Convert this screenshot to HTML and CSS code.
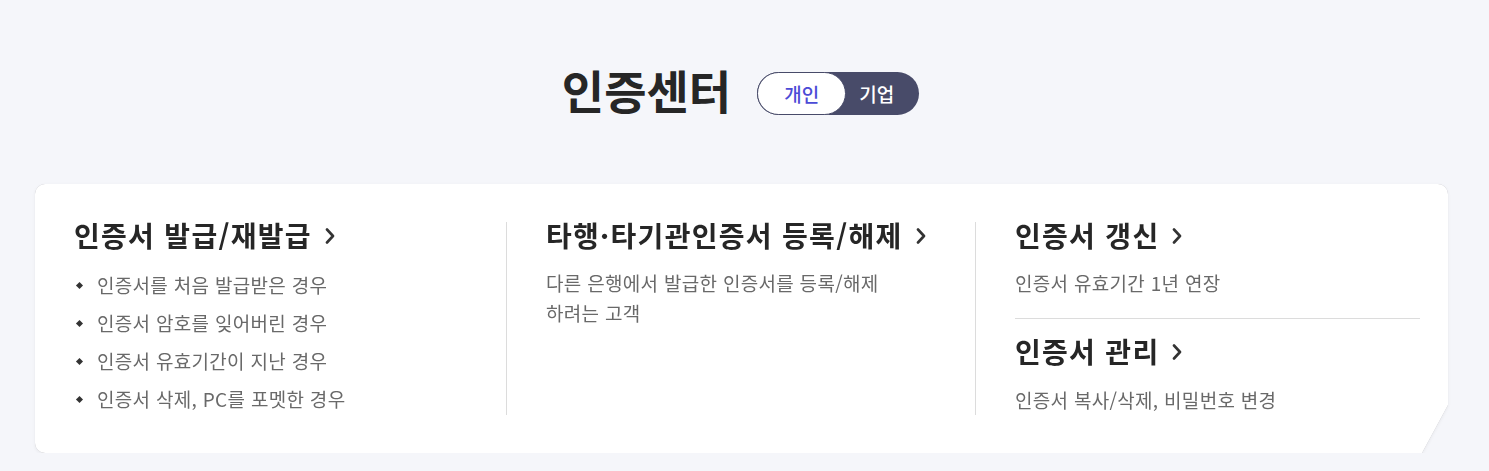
FILE: index.html
```html
<!DOCTYPE html>
<html lang="ko">
<head>
<meta charset="utf-8">
<title>인증센터</title>
<link rel="stylesheet" href="styles.css">
</head>
<body>
<main class="page">
  <header class="head">
    <h1 class="title">인증센터</h1>
    <div class="toggle">
      <span class="tog tog-on">개인</span>
      <span class="tog tog-off">기업</span>
    </div>
  </header>
  <div class="card-wrap">
    <section class="card">
      <div class="col">
        <h2 class="h"><span>인증서 발급/재발급</span><svg class="chev" viewBox="0 0 10 16"><path d="M2 1.5l6 6.5-6 6.5" fill="none" stroke="#333" stroke-width="2.6" stroke-linecap="round" stroke-linejoin="round"/></svg></h2>
        <ul class="list">
          <li>인증서를 처음 발급받은 경우</li>
          <li>인증서 암호를 잊어버린 경우</li>
          <li>인증서 유효기간이 지난 경우</li>
          <li>인증서 삭제, PC를 포멧한 경우</li>
        </ul>
      </div>
      <div class="col">
        <h2 class="h"><span>타행·타기관인증서 등록/해제</span><svg class="chev" viewBox="0 0 10 16"><path d="M2 1.5l6 6.5-6 6.5" fill="none" stroke="#333" stroke-width="2.6" stroke-linecap="round" stroke-linejoin="round"/></svg></h2>
        <p class="desc">다른 은행에서 발급한 인증서를 등록/해제<br>하려는 고객</p>
      </div>
      <div class="col col3">
        <div class="sub">
          <h2 class="h"><span>인증서 갱신</span><svg class="chev" viewBox="0 0 10 16"><path d="M2 1.5l6 6.5-6 6.5" fill="none" stroke="#333" stroke-width="2.6" stroke-linecap="round" stroke-linejoin="round"/></svg></h2>
          <p class="desc">인증서 유효기간 1년 연장</p>
        </div>
        <div class="sub sub2">
          <h2 class="h"><span>인증서 관리</span><svg class="chev" viewBox="0 0 10 16"><path d="M2 1.5l6 6.5-6 6.5" fill="none" stroke="#333" stroke-width="2.6" stroke-linecap="round" stroke-linejoin="round"/></svg></h2>
          <p class="desc">인증서 복사/삭제, 비밀번호 변경</p>
        </div>
      </div>
    </section>
  </div>
</main>
</body>
</html>
```
FILE: styles.css
```css
* { box-sizing: border-box; }
html, body { margin: 0; padding: 0; }
body {
  background: #f5f6fa;
  font-family: "Noto Sans CJK KR", "Noto Sans", sans-serif;
  color: #222;
}
.page {
  padding: 60px 41px 0 35px;
}
.head {
  display: flex;
  justify-content: center;
  align-items: center;
  gap: 26px;
  height: 64px;
  margin-left: -2px;
}
.title {
  margin: 0;
  margin-top: -6px;
  font-size: 46px;
  font-weight: 700;
  color: #262626;
  letter-spacing: 0;
  line-height: 1;
}
.toggle {
  display: flex;
  width: 162px;
  height: 43px;
  border-radius: 22px;
  background: #484b69;
  margin-top: 2px;
}
.tog {
  display: flex;
  align-items: center;
  justify-content: center;
  font-size: 19px;
  font-weight: 500;
  line-height: 1;
}
.tog-on {
  width: 89px;
  background: #fff;
  border: 1px solid #484b69;
  border-radius: 22px;
  color: #4b4bd6;
}
.tog-off {
  flex: 1;
  color: #fff;
  padding-right: 12px;
}
.card-wrap {
  margin-top: 60px;
  filter: drop-shadow(0 0 0.7px #b0b0b8) drop-shadow(0 1px 1.5px rgba(0,0,0,0.06));
}
.card {
  display: grid;
  grid-template-columns: 471px 469px 1fr;
  background: #fff;
  border-radius: 10px;
  padding: 38px 0 38px;
  clip-path: polygon(0 0, 100% 0, 100% calc(100% - 48px), calc(100% - 26px) 100%, 0 100%);
}
.col {
  padding: 0 28px 0 39px;
  border-left: 1px solid #dcdcdc;
  height: 193px;
}
.col:first-child { border-left: 0; }
.h {
  margin: 0;
  display: flex;
  align-items: center;
  gap: 13px;
  font-size: 28px;
  font-weight: 700;
  color: #262626;
  letter-spacing: 1.3px;
  line-height: 30px;
  height: 30px;
  margin-top: -2px;
}
.chev { width: 10px; height: 16px; margin-top: 2px; }
.list {
  list-style: none;
  margin: 16px 0 0;
  padding: 0;
}
.list li {
  position: relative;
  padding-left: 23px;
  font-size: 19px;
  color: #696969;
  line-height: 38px;
  letter-spacing: 0.3px;
}
.list li::before {
  content: "";
  position: absolute;
  left: 3px;
  top: 17px;
  width: 5px;
  height: 5px;
  background: #333;
  transform: rotate(45deg);
}
.desc {
  margin: 18px 0 0;
  font-size: 19px;
  color: #696969;
  line-height: 30px;
  letter-spacing: 0.3px;
}
.col3 { display: flex; flex-direction: column; }
.sub { padding-bottom: 20px; border-bottom: 1px solid #dcdcdc; }
.sub2 { border-bottom: 0; padding-top: 19px; padding-bottom: 0; }
.sub2 .desc { margin-top: 19px; }
```
